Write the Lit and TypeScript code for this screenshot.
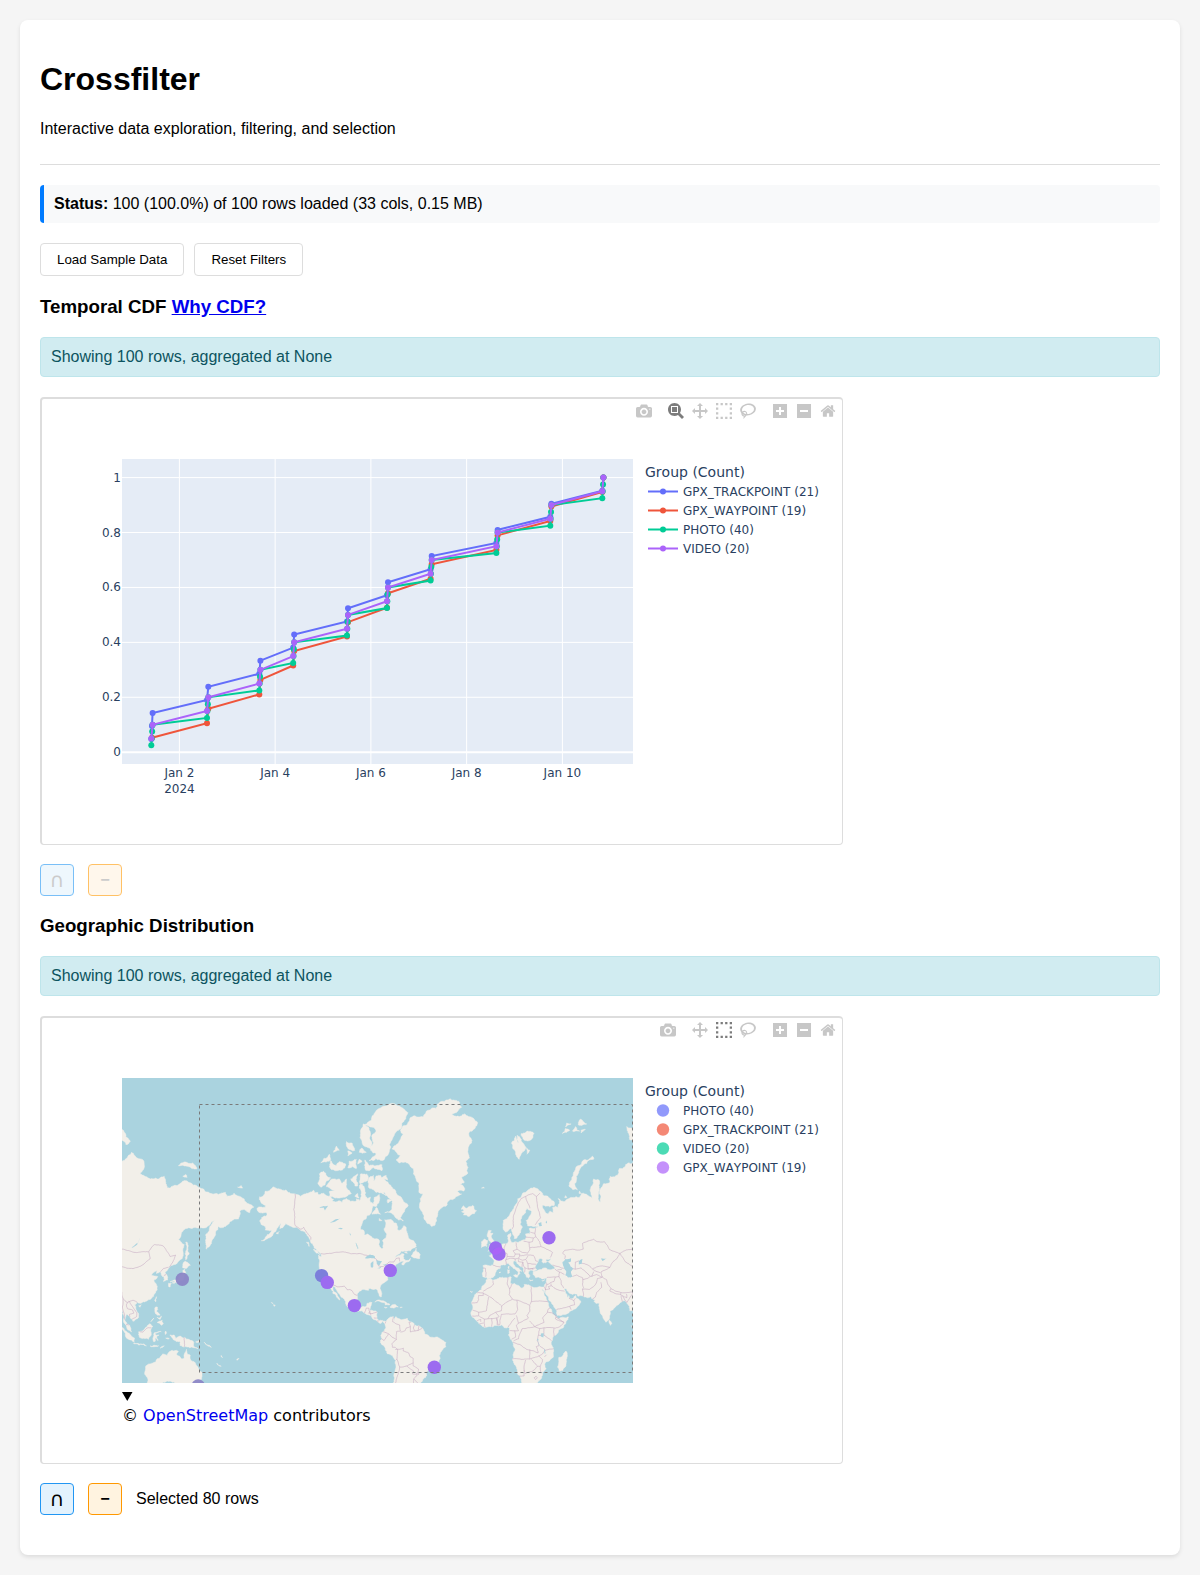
import { LitElement, html, svg, css } from "lit";
import { customElement, property } from "lit/decorators.js";

/* ---------- toolbar icons ---------- */

const ICONS: Record<string, { label: string; width: number; path: string }> = {
  camera: {
    label: "Download plot as a png",
    width: 1000,
    path: "m500 450c-83 0-150-67-150-150 0-83 67-150 150-150 83 0 150 67 150 150 0 83-67 150-150 150z m400 150h-120c-16 0-34 13-39 29l-31 93c-6 15-23 28-40 28h-340c-16 0-34-13-39-28l-31-94c-6-15-23-28-40-28h-120c-55 0-100-45-100-100v-450c0-55 45-100 100-100h800c55 0 100 45 100 100v450c0 55-45 100-100 100z m-400-550c-138 0-250 112-250 250 0 138 112 250 250 250 138 0 250-112 250-250 0-138-112-250-250-250z m365 380c-19 0-35 16-35 35 0 19 16 35 35 35 19 0 35-16 35-35 0-19-16-35-35-35z",
  },
  zoom: {
    label: "Zoom",
    width: 1000,
    path: "m1000-25l-250 251c40 63 63 138 63 218 0 224-182 406-407 406-224 0-406-182-406-406s183-406 407-406c80 0 155 22 218 62l250-250 125 125z m-812 250l0 438 437 0 0-438-437 0z m62 375l313 0 0-312-313 0 0 312z",
  },
  pan: {
    label: "Pan",
    width: 1000,
    path: "m1000 350l-187 188 0-125-250 0 0 250 125 0-188 187-187-187 125 0 0-250-250 0 0 125-188-188 186-187 0 125 252 0 0-250-125 0 187-188 188 188-125 0 0 250 250 0 0-126 187 188z",
  },
  select: {
    label: "Box Select",
    width: 1000,
    path: "m0 850l0-143 143 0 0 143-143 0z m286 0l0-143 143 0 0 143-143 0z m285 0l0-143 143 0 0 143-143 0z m286 0l0-143 143 0 0 143-143 0z m-857-286l0-143 143 0 0 143-143 0z m857 0l0-143 143 0 0 143-143 0z m-857-285l0-143 143 0 0 143-143 0z m857 0l0-143 143 0 0 143-143 0z m-857-286l0-143 143 0 0 143-143 0z m286 0l0-143 143 0 0 143-143 0z m285 0l0-143 143 0 0 143-143 0z m286 0l0-143 143 0 0 143-143 0z",
  },
  lasso: {
    label: "Lasso Select",
    width: 1031,
    path: "m1018 538c-36 207-290 336-568 286-277-48-473-256-436-463 10-57 36-108 76-151-13-66 11-137 68-183 34-28 75-41 114-42l-55-70 0 0c-2-1-3-2-4-3-10-14-8-34 5-45 14-11 34-8 45 4 1 1 2 3 2 5l0 0 113 140c16 11 31 24 45 40 4 3 6 7 8 11 48-3 100 0 151 9 278 48 473 255 436 462z m-624-379c-80 14-149 48-197 96 42 42 109 47 156 9 33-26 47-66 41-105z m-187-74c-19 16-33 37-39 60 50-32 109-55 174-68-42-25-95-24-135 8z m360 75c-34-7-69-9-102-8 8 62-16 128-68 170-73 59-175 54-244-5-9 20-16 40-20 61-28 159 121 317 333 354s407-60 434-217c28-159-121-318-333-355z",
  },
  plus: {
    label: "Zoom in",
    width: 875,
    path: "m1 787l0-875 875 0 0 875-875 0z m687-500l-187 0 0-187-125 0 0 187-188 0 0 125 188 0 0 187 125 0 0-187 187 0 0-125z",
  },
  minus: {
    label: "Zoom out",
    width: 875,
    path: "m0 788l0-876 876 0 0 876-876 0z m688-500l-500 0 0 125 500 0 0-125z",
  },
  home: {
    label: "Reset view",
    width: 928,
    path: "m786 296v-267q0-15-11-26t-25-10h-214v214h-143v-214h-214q-15 0-25 10t-11 26v267q0 1 0 2t0 2l321 264 321-264q1-1 1-4z m124 39l-34-41q-5-5-12-6h-2q-7 0-12 3l-386 322-386-322q-7-4-13-4-7 2-12 7l-35 41q-4 5-3 13t6 12l401 334q18 15 42 15t43-15l136-114v109q0 8 5 13t13 5h107q8 0 13-5t5-13v-227l122-102q5-5 6-12t-4-13z",
  },
};

@customElement("mode-bar")
class ModeBar extends LitElement {
  @property({ attribute: false }) groups: string[][] = [];
  @property() active = "";

  static styles = css`
    :host { display: flex; gap: 8px; }
    .group { display: flex; }
    button {
      display: flex; align-items: center; justify-content: center;
      width: 24px; height: 20px; padding: 0; border: 0; background: none;
      fill: rgba(68, 68, 68, 0.3); cursor: pointer;
    }
    button.active, button:hover { fill: rgba(68, 68, 68, 0.7); }
    svg { height: 16px; display: block; }
  `;

  render() {
    return this.groups.map(
      (g) => html`<div class="group">
        ${g.map((name) => {
          const icon = ICONS[name];
          return html`<button
            class=${name === this.active ? "active" : ""}
            title=${icon.label}
            aria-label=${icon.label}
          >
            <svg viewBox="0 0 ${icon.width} 1000" width="16">
              <path transform="matrix(1 0 0 -1 0 850)" d=${icon.path}></path>
            </svg>
          </button>`;
        })}
      </div>`
    );
  }
}

const plotStyles = css`
  :host {
    display: block; position: relative; max-width: 800px;
    border: solid #dddddd; border-width: 2px 1px 1px 2px; border-radius: 4px;
    font-family: "DejaVu Sans", Verdana, sans-serif;
  }
  .plot { display: block; width: 100%; height: auto; }
  mode-bar { position: absolute; top: 2px; right: 2px; }
  text { fill: #2a3f5f; font-size: 12px; font-kerning: none; }
  .legend-title { font-size: 14px; }
  .end { text-anchor: end; }
  .mid { text-anchor: middle; }
`;

/* ---------- cumulative distribution chart ---------- */

// Horizontal extent of each burst of timestamps, in plot units.
const BURSTS: [number, number][] = [
  [109.3, 110.6], [165, 166.3], [217.3, 218.4], [251.2, 252.2], [305, 306],
  [345, 346], [388.6, 389.7], [454.4, 455.6], [508.3, 509.4], [560.3, 561.4],
];

const yAt = (v: number) => 353.2 - 274.6 * v;

// Number of points in burst k, for each series.
const SERIES = [
  { name: "GPX_TRACKPOINT", total: 21, color: "#636efa", count: (k: number) => (k ? 2 : 3) },
  { name: "GPX_WAYPOINT", total: 19, color: "#ef553b", count: (k: number) => (k ? 2 : 1) },
  { name: "PHOTO", total: 40, color: "#00cc96", count: () => 4 },
  { name: "VIDEO", total: 20, color: "#ab63fa", count: () => 2 },
];

const seriesPoints = (s: (typeof SERIES)[number]): [number, number][] => {
  const out: [number, number][] = [];
  let n = 0;
  BURSTS.forEach(([a, b], k) => {
    const c = s.count(k);
    for (let i = 0; i < c; i++) {
      n++;
      const t = c > 1 ? i / (c - 1) : 0.5;
      out.push([a + (b - a) * t, yAt(n / s.total)]);
    }
  });
  return out;
};

@customElement("cdf-plot")
class CdfPlot extends LitElement {
  static styles = [
    plotStyles,
    css`
      .area { fill: #e5ecf6; }
      .grid { stroke: #fff; stroke-width: 1; }
      .zero { stroke: #fff; stroke-width: 2; }
      .line { fill: none; stroke-width: 2; }
    `,
  ];

  render() {
    const days = ["Jan 2", "Jan 4", "Jan 6", "Jan 8", "Jan 10"];
    const dayX = (i: number) => 137.4 + 95.75 * i;
    return html`
      <svg class="plot" viewBox="0 0 800 445" role="img" aria-label="Temporal CDF">
        <rect class="area" x="80" y="60" width="511" height="305"></rect>
        ${days.map((d, i) => svg`
          <line class="grid" x1=${dayX(i)} x2=${dayX(i)} y1="60" y2="365"></line>
          <text class="mid" x=${dayX(i)} y="378">${d}</text>`)}
        <text class="mid" x=${dayX(0)} y="394">2024</text>
        ${[0, 0.2, 0.4, 0.6, 0.8, 1].map((v) => svg`
          <line class=${v ? "grid" : "zero"} x1="80" x2="591" y1=${yAt(v)} y2=${yAt(v)}></line>
          <text class="end" x="79" y=${yAt(v) + 4}>${v}</text>`)}
        ${SERIES.map((s) => {
          const pts = seriesPoints(s);
          return svg`<polyline class="line" stroke=${s.color} points=${pts.map((p) => p.join()).join(" ")}></polyline>
            ${pts.map((p) => svg`<circle cx=${p[0]} cy=${p[1]} r="3" fill=${s.color}></circle>`)}`;
        })}
        <text class="legend-title" x="603" y="78">Group (Count)</text>
        ${SERIES.map((s, i) => svg`
          <line class="line" stroke=${s.color} x1="606" x2="636" y1=${92.5 + 19 * i} y2=${92.5 + 19 * i}></line>
          <circle cx="621" cy=${92.5 + 19 * i} r="3" fill=${s.color}></circle>
          <text x="641" y=${97 + 19 * i}>${s.name} (${s.total})</text>`)}
      </svg>
      <mode-bar active="zoom" .groups=${[["camera"], ["zoom", "pan", "select", "lasso"], ["plus", "minus", "home"]]}></mode-bar>
    `;
  }
}

/* ---------- world map ---------- */

// Outlines as "lon,lat" pairs.
const LAND = [
  // North and Central America
  "-168,65.6 -166.5,66.2 -162,66.1 -161.8,66.6 -163.8,67 -166.3,68.3 -166,68.9 -163,69.3 -161.9,70.3 -158,70.8 -156.5,71.3 -154.5,70.9 -152,70.8 -150,70.5 -145,70 -141,69.6 -137,69 -134.5,69.6 -132,69.7 -129.5,70.1 -128,70.5 -127.5,70 -125,70 -124.4,69.4 -121,69.8 -117,69 -114,68.3 -115,67.8 -110,67.9 -108,67.4 -107.5,68 -105,68.5 -102,67.7 -98,67.8 -98,68.4 -96,68.2 -96,67.2 -94.5,69 -94.5,70 -96,71 -95,72 -93,71.5 -91.5,70 -92,69.5 -90,68.5 -88,68.8 -88,67.5 -86,67 -85.5,68.7 -82,69.5 -81.5,68.5 -82,67.5 -84,66.3 -86.5,66.3 -87,65.3 -88,64.2 -90.5,63.6 -91,62.7 -93.5,61.7 -94.8,60 -94.7,58.8 -93,58.7 -92.5,57 -90,57.2 -88,56.5 -85,55.3 -82.3,55.1 -82.2,53 -81,51.8 -80,51.2 -79,51.5 -79,53 -79.5,54.7 -77,56 -76.6,57.3 -78.5,58.8 -77.5,60 -78,62.3 -75,62.3 -73.5,62.4 -71.5,61.2 -69.6,61 -69.5,59 -68,58.5 -66.2,58.8 -65,60 -64.5,60.3 -62.5,58.2 -61.5,56.5 -60,55 -57.5,54.5 -56,53 -55.8,52 -58.5,51.3 -60,50.2 -64,50.3 -66.5,50.2 -69,48.5 -71,47 -69,48 -66,49.1 -64.4,48.8 -65,47.7 -64.5,46.3 -61.5,45.7 -60,46.8 -60.3,45.8 -63.5,44.6 -65.5,43.5 -66,44.3 -64.5,45.3 -67,45 -69,44.1 -70.5,43.5 -70.7,42.6 -70,41.8 -71.5,41.4 -73.8,40.7 -74,39.8 -75,38.7 -76.2,39.4 -76,37 -75.7,35.5 -77.5,34.3 -79,33.5 -81,32 -81.4,30.5 -80.1,27 -80.3,25.3 -81.2,25.2 -82.7,27.8 -82.8,29 -84,30 -85.5,29.8 -88,30.4 -89.5,30.2 -89.2,29.2 -91.5,29.5 -94,29.6 -96,28.5 -97.4,27 -97.3,25 -97.8,22.5 -97,20.5 -95.8,18.8 -94.5,18.2 -92,18.6 -90.7,19.5 -90.4,21 -88,21.6 -87,21.4 -87.5,19.8 -88.2,18 -88.5,16 -86,15.9 -83.3,15 -83.6,12.5 -83.7,11 -82,9 -79.8,9.5 -77.3,8.5 -77.5,7 -79.5,8.9 -80.4,7.5 -83,8.3 -85.7,10 -87.5,13 -91.5,14 -94,16.1 -96.5,15.7 -99.5,16.7 -102,17.9 -105,19.5 -105.6,21 -105.4,22 -107.5,24.6 -109.4,26 -111,28 -112.5,30 -113.2,31.3 -114.7,31.7 -114.5,30 -112.5,27.8 -111,25.5 -109.6,23.2 -110.2,23.3 -112,25 -112.3,26.2 -114.5,27.3 -114.2,28.5 -115.8,30.2 -117.1,32.5 -118.5,34 -120.6,34.6 -122,36.8 -123.8,39.3 -124.3,40.5 -124.2,43 -124,46.2 -124.6,48.3 -122.7,47.5 -122.7,49 -125,50.2 -127.7,51.5 -128.5,53 -130.3,54.7 -131.5,56 -134,58 -137,58.5 -140,59.8 -144,60.1 -147.5,61 -150,59.5 -151.8,59.2 -151,61 -154,59.2 -156.5,57.3 -159,55.8 -162,55 -164.8,54.6 -162,56 -158.5,57.6 -157.5,58.7 -162,58.7 -162,60 -165,60.8 -166,61.8 -164.5,63 -161,63.6 -161,64.5 -163,64.5 -166.3,64.6",
  // South America
  "-77.3,8.5 -75.5,10.6 -72,12 -71.5,11 -71.5,9.2 -70,12 -68,10.6 -64.5,10.2 -62,10.7 -60.5,8.5 -57,6 -54,5.8 -51.5,4 -50,1.5 -50,-.2 -48,-.7 -44,-2.6 -40,-2.9 -37,-4.8 -35,-6 -35,-9 -37.2,-11 -39,-13 -39.2,-17.5 -41,-21 -42,-23 -45,-23.5 -48.5,-25.8 -48.7,-28.5 -51.5,-31.5 -53.5,-34 -56,-35 -58,-34.5 -57,-36.5 -62,-39 -65,-41 -74,-42 -73,-37 -71.5,-31 -70.5,-24 -70.3,-18.3 -76,-14 -79,-8 -81.2,-6 -80,-3.3 -80.8,-1 -80,.8 -78.5,2 -77,4 -77.8,7",
  // Eurasia
  "28,71 31,70.3 33,69.4 41,67.7 41,66.5 35,66.4 33,66.7 35,64.5 37,64 38,64.9 40.5,64.6 40,66 42,66.4 44,66 44,68.5 46,67.8 48,67.6 54,68.7 59,68.8 60.5,69.8 65,69.2 68,68.2 67,69.5 66.8,71 69,73 72.5,72.8 72.8,70.5 72,68.5 73.5,67.5 74,68.8 74,71 76,72 78,72 80,72.2 80.5,73.5 86,73.8 87,75 93,76 99,76.4 104,77.7 108,76.8 112,76.5 113,75.5 110,74 113,73.6 119,73 123,73 127,73.5 128,72 129,71 133,71.5 136,71.6 140,72.5 145,72.2 150,71.5 153,70.9 160,69.7 165,69.5 170,70 171,69 176,69.8 180,69 185,67.2 188,66.8 190,66.2 187,64.5 183,65.5 180,65 179,62.5 174,61.8 170,60 165,60 163,58 162,56 160,53.3 156.7,51 156,54 156,57 159,60 163.5,62.5 160,61.5 155,59.5 150,59.5 143,59.3 137,55 139,54 141,53 140,50.5 140.3,48 135.5,44 132,43.2 130.5,42.3 127.5,39.7 129.4,37 129.2,35.3 126.5,34.5 126.8,37 125,38 124.5,39.8 121.5,39 122,40.6 119,39.2 118,38 122.4,37.3 119.5,35.3 121.8,32 122,29.5 119.5,25.5 117,23.5 114,22.3 110.5,21 108,21.6 106,20 107,17 109,13.5 109,11.5 106.8,10.3 105,8.7 104.8,10 102.5,12 101,13.4 100,13.3 99.3,10 100.5,7.3 102.5,6 103.5,3 104,1.4 101.5,2.7 100.3,6 98.4,8 98.7,11.5 97.5,16 94.3,16 94,19 92,21.5 91,22.6 88,21.7 86.8,20.5 85,19.5 82.3,16.6 80.3,15.5 80.2,13 79.8,10.3 77.5,8.1 76.3,9.8 74.8,13 73,18 72.8,21 70.5,20.8 69,22.3 70,23 67.5,24 66.5,25.3 62,25.2 57.5,25.7 56.8,27 54,26.6 51.3,27.9 50,30 48,30 49,27.5 50.2,26.5 50.8,24.8 51.4,26 51.6,24.3 54.5,24.2 56.3,26 56.5,24.4 59.8,22.5 57.8,19 55,17 52,15.6 45,12.7 43.3,12.7 42.7,16.5 39.2,21 37.2,25 34.8,28.2 35,29.5 34.2,27.8 32.5,30 32.3,31.2 34.3,31.3 35.5,33.8 36,36.6 34,36.2 32.5,36 30.6,36.7 28,36.7 26.3,38.5 26.3,40 29,40.5 31,41.1 35,42 38,41 41.5,41.5 41.5,42.5 38,44.5 37,45.4 39,47 35.3,46.3 35.3,45.2 36.5,45.3 33.6,44.5 32.5,45.4 33.5,46.1 31,46.7 29.7,45 28.6,43.8 27.7,42.5 28.2,41.4 29,41.1 26.5,40.4 24,40.8 23.5,40 22.8,40.4 23,39 24,38 23,36.5 21.7,36.9 21.2,38.3 19.4,40.3 19.5,41.8 17,43 15,44.3 14.5,45.3 13.6,45.5 12.4,45.3 12.4,44.2 14,42.5 16,41.9 18.4,40.2 17,40.4 16.6,39.8 17,39 15.8,38 15.8,40 14.3,40.8 12.3,41.8 10.3,43.3 8.8,44.4 7,43.6 4,43.5 3.1,43 3.2,41.8 .5,40.7 -.3,39.3 -.5,38 -2,36.8 -5.5,36 -6.5,37 -9,37.1 -9.4,38.8 -8.8,41 -9,43.1 -2,43.4 -1.4,44.5 -1.2,46 -4.5,48 -1.5,48.7 -1.7,49.7 1.5,50.2 4,51.8 5,53.3 8.5,53.7 8.2,56.5 10.5,57.6 10,55.5 11,54 14,54.2 18.5,54.7 21,55.2 21,57.3 24,57.2 23.5,59.2 28,59.5 30,60 25,60.2 22.5,60.2 21.4,62 25.3,64.9 22,65.8 21,64.5 17.5,62.3 17.2,60.6 18.8,59.8 16.5,57 14.5,55.5 13,55.5 11,59 10.5,59.3 7,58 5.2,59.5 5.2,62 10,64 13,66.3 15.5,68.4 19,69.8 25,71",
  // Africa
  "-6,35.8 -2,35.1 3,36.8 10,37.3 11,36.8 10.2,34.2 11,33.2 15.2,32.3 18.5,30.5 20,31.5 20,32.7 23,32.6 25,31.6 29,30.9 31,31.5 32.5,31.1 32.5,29.9 34,26.8 35.5,24 37.2,21 37.5,18.5 39.5,15.2 43,11.6 44.5,10.5 51.2,11.8 50.8,10 47.5,4.3 43,0 40,-3 39,-6 40.6,-11 40.6,-15 35,-19.8 35.5,-24 32.8,-26 32.5,-28.5 30,-31.5 27,-33.7 20,-34.8 18.3,-34 18.2,-32 15.2,-27 14.4,-22.5 11.8,-18 13.7,-11 12.2,-6 9,-1 9.7,3.8 8.5,4.6 6,4.3 4.3,6.3 1,5.9 -2,4.8 -4.5,5.2 -7.7,4.4 -11.5,6.9 -13.3,9 -15,11 -16.8,12.5 -17.5,14.7 -16.3,17 -16.5,20 -17,21 -15.5,24.5 -13,27.8 -10,29.5 -9.7,31.5 -7,33.7",
  "49.3,-12 50.4,-15.5 49.5,-18 47.2,-25 45,-25.5 43.5,-23 44.3,-20 44.3,-16.5 47,-15.5",
  // Greenland, Iceland, British Isles
  "-73,78.2 -68,79.2 -65,80.1 -67,80.6 -62,81.3 -58,82.1 -51,82 -48,82.6 -42,82.8 -38,83.4 -32,83.6 -26,83.4 -24,82.9 -31,82.3 -22,82.3 -16,81.9 -12.5,81.4 -16,80.6 -19,80.2 -17,79 -19.5,77.6 -18.5,76.8 -21,76.2 -19.5,75.2 -20,74 -24,73.4 -22,72.3 -25,71.9 -22,71 -22.5,70.3 -27,70.3 -24,69.6 -32,68.2 -35,66.4 -40,65.2 -41,63.3 -43,60.3 -45,60 -48,61 -50.5,62.8 -52,65 -53.5,67 -53,68.5 -51,69.6 -54,70 -54,71.3 -56,73 -58,75 -62,76 -68,76 -70,76.5 -67,77.2",
  "-24.4,65.6 -22.5,66.5 -20.5,65.8 -16,66.6 -13.5,65.1 -15,64.2 -18.8,63.3 -22.7,63.8 -22,64.5 -24,64.8 -22.2,65.3",
  "-5.5,50.1 -3,51.4 -5,51.8 -4.5,53 -3,53.5 -5,55 -6,56.5 -5,58.6 -3.1,58.5 -4,57.6 -2,57.5 -3,56 -1.5,54.8 .2,53 1.7,52.7 1,51.2 -2,50.6",
  "-10,51.7 -6.4,52.2 -6,53.5 -5.6,54.6 -7.5,55.3 -10,54.2",
  // Arctic islands
  "-61.5,66.6 -64,65 -67,63 -65,61.9 -70,62.8 -74,64.5 -78,64.5 -73,65.5 -73,68 -76,69 -79,70 -84,70 -89,71 -89.5,73 -86,73.7 -86,72.5 -84,73.6 -81,73.7 -78,72.8 -74,71.7 -71,70.7 -67,69",
  "-117,69 -113,68.6 -105,69 -101.5,69.7 -105,71 -105,73 -108,72 -110,73 -114,73 -118,72 -119,71.3 -113,70.4 -117,70.2",
  "-125,72 -124,74 -121,74.5 -116,73.2 -120,71.7 -123,71.2",
  "-102,73 -97,74 -97,71.5 -99,71.5", "-95.5,72 -90,72.7 -90.5,74 -95,74",
  "-80,75.7 -80,74.6 -91.5,74.7 -92,76.5 -89,75.5", "-117,75.3 -108,74.7 -105.5,75.8 -110,76.2 -112,75.5 -116,76.4",
  "-104,75.2 -98,75 -98,76.6 -103,76.3", "-123,76 -116,76.6 -117,77.4 -121,76.7", "-105,78.6 -99,78 -101,79 -105,79.2", "-114,77.7 -110,78 -112,78.6", "-96,77.7 -91,77.7 -94,78.3", "-97,75.8 -94,76.2 -96,76.6", "-104,77.2 -101,77.6 -104,77.9",
  "-76.5,78.3 -75,79 -79.5,76.4 -89,76.4 -84,77.5 -88,78 -86,79 -87,80 -84,80.5 -92,81.2 -85,82.4 -78,83 -70,83.1 -61.5,82.4 -66,81 -72,79.8",
  "-95,80.2 -94,79.2 -88,78.2 -87,79 -88,80.3 -93,81.3", "-87,64 -81,64 -84,66", "-82,62.7 -80,62 -82,62", "-76,67.3 -76,68.2 -73,68", "-80,73.2 -76,72.8 -77,73.7", "-99,69 -96,68.6 -97,69.7", "-80,69.8 -77,69.2 -78,70",
  "11,79 14,79.9 16,79 15,80 18,79.5 21,78.5 18,77.5 16.5,76.6 14,77.5", "18,80.2 22,80.5 27,80.2 23,79.3 20,79.4", "21,78.4 24,78 22,77.4",
  "47,80.2 52,80.6 49,80.8", "54,80.5 59,80.5 56,81", "58,81.2 64,81.3 60,81.8", "60,80.3 63,80.7 60,80.6", "49,81 53,81.3 50,81.4",
  "51.5,71.5 54,70.7 57.5,70.6 55.5,72 56.5,73.5 59,74.8 62,75.7 68.8,76.6 68,77.1 61,76.3 56.5,75.3 54.5,74 52.5,72.5", "94,79.5 100,78.8 103,79.2 98,80.6 92,81",
  "137,75.5 145,75.3 150,75 147,76 139,76", "140,73.5 143,73.3 142,73.9", "178.5,71.2 182,71 181,71.6", "49,69.2 50,68.7 48.5,68.7", "59,70.3 60,69.8 58.5,69.8", "-10,71 -8,71 -8.5,71.2",
  // Atlantic and Caribbean islands
  "-59.3,47.7 -56,51.5 -55.5,49.8 -53,48.5 -53.3,46.8 -56,47", "-64,49.9 -62,49.2 -64,49.5", "-128.3,50.8 -125,50 -123.5,48.4 -126,49.2",
  "-133,54 -131.7,54 -131.2,52.2", "-154.5,57.6 -152.3,58.2 -153,57.2", "-85,21.9 -82,23.2 -79,22.6 -75,20.7 -74.3,20.1 -77.6,19.9 -78.5,21.4 -82,22.4", "-74.4,18.5 -73,19.9 -70,19.7 -68.5,18.6 -71,18", "-78.3,18.4 -76.3,18.2 -77.5,17.8", "-67.2,18.4 -65.7,18.3 -67,18", "-156,20.2 -155,19.6 -155.8,19", "-157.8,21.5 -156.5,20.9 -157.5,21.2",
  // Mediterranean
  "12.5,38 15.6,38.2 15.1,36.8", "8.3,41 9.6,41 9.5,39.2 8.5,39", "8.7,42.5 9.4,43 9.3,41.5", "32.4,35 34.5,35.6 33.5,34.8", "23.6,35.5 26.3,35.3 24.5,34.9", "2.4,39.5 3.4,39.8 3,39.3",
  // Asia-Pacific islands
  "142,54 143,54 143.5,50 144.5,49 143,47 142,46 142,50", "140,42 141.5,45.4 145.3,43.3 143,42", "140,40.5 141.4,41.3 142,39.5 140.8,35.7 139.5,35.1 137,34.6 135.5,33.6 134,34.6 131,34.2 135.5,35.6 137.3,37.3 139.5,38.5", "130,33.5 132,33.5 131.2,31.3 130.2,31.3", "132.5,33.7 134.5,34.2 134,33.3",
  "120.2,23 121.5,25.2 121,22", "109,19.3 110.8,20 110,18.4", "120.3,16 120.8,18.5 122.2,18.3 121.5,15.5 124,13 121,13.8", "122,8 125.5,9.6 126.3,7 125,6 123.5,7.5", "122,11.5 124,10 125,12.3 123,11", "117.5,8.5 119.5,11 118.5,9.7",
  "109,1.5 111,1.8 113,3.2 116.7,7 119,5.2 117.8,3.5 117.8,1 116,-3.8 113,-3.3 110.2,-2.8", "95.3,5.6 98,4.2 103.5,-1 106,-3 105.8,-5.8 102,-3.9 98.7,1.7", "105.3,-6.7 108.5,-6.7 112.7,-7 114.4,-8.4 109,-7.8",
  "119,-3.3 119.8,.6 124.8,1.5 120.5,.4 121.3,-1 123.3,-.9 121.7,-2 122.5,-4.8 121,-2.8 120.4,-5.5 119.4,-5.5", "117,-8.5 123,-8.4 119,-9", "124,-10.1 127,-8.5 125,-9", "128,2 128.5,.5 127.6,-.5", "128,-3 130.5,-3.3 129,-3.5",
  "131,-.8 134,-.9 135,-3.3 138,-1.6 144.5,-4 147.8,-6.2 147.5,-8 150.7,-10.5 147,-9.5 143,-9.2 141,-9.1 138,-8.2 138,-5.5 133.2,-4 132.5,-2.8", "149,-5.7 152,-4.4 151,-6", "155,-6 156.5,-7.6 160,-9.5 156,-7.3", "164,-20.2 167,-22.3 165.5,-21.8", "178,-17.5 179.5,-17 178,-18.3", "167,-15 168,-16.5 167,-16",
  "114,-22 117,-20.7 121,-19.5 122.3,-17.2 124,-16.5 126,-14 129,-15 130.5,-12.5 132.5,-11.5 136.8,-12.2 135.7,-14.8 139,-17.3 141,-17 141.6,-13 142.6,-10.8 143.6,-14.3 145.3,-15 146.3,-18.8 149,-20.5 151,-23.5 153.3,-26 153.4,-29 151.5,-33 150,-37 140,-38 136,-34.5 131,-31.5 125,-33 118,-35 115,-34 115.5,-31.5 113.3,-26",
  "79.8,9.5 81.8,7.5 80.5,6 79.8,7.5", "-18,28.7 -16.3,28.3 -17,28", "69,49.5 70,49.3",
];

const WATER = [
  "47,45 49,46.4 53,46.8 53,45.2 51,44.7 52.8,42.6 54.5,41.5 53,40.2 54,37.3 51,36.8 49,38 49.6,40.3 47.5,43",
  "58.5,45.5 61,46.5 60.5,44 58.5,43.8", "31.8,.3 34,.3 33.5,-2.5 31.8,-2", "29.2,-3.5 30,-3.7 31,-8.5 30.2,-7.5", "34,-10 35,-13.5 34.6,-14", "30,61 32,61.5 32.5,60.2 31,60",
  "-92,46.8 -88.5,48.6 -85,47.8 -84.7,46.7 -88,47", "-87.8,42.3 -86.3,42.2 -86,45.5 -87.8,44.5", "-84,46 -80,45.5 -82,43.2 -83.5,44", "-83.3,41.8 -79,42.8 -81.5,41.7", "-79.5,43.5 -76.3,44 -77,43.3",
  "-98.5,53.8 -97,51 -96.5,51.5 -98,53.7", "-116.5,61.2 -109.5,62.7 -113.5,62.2", "-124,66 -118,66.5 -120,65.2 -121,66", "-111,59.3 -106.5,59.3 -109,59", "-103,58 -101.8,56.5 -102.5,57", "104,51.5 108,53 109.7,55.6 108.7,54", "35,61.5 36,62 36,61", "78,46.8 75,45.5 74,46.7", "-64.8,46.5 -62.2,46.3 -64,46.9",
];

const BORDERS = [
  "-141,69.6 -141,60.3 -137,59 -135,59.7 -133,58 -130,56 -130,55", "-122.8,49 -95.2,49 -92,48.3 -89.5,48 -88,48.2 -84.8,46.8 -83.5,46 -82.4,43 -79,42.7 -76.5,44 -74.8,45 -71.5,45 -70,46.7 -67.8,47 -67.5,45.3", "-117.1,32.5 -114.8,32.6 -111,31.3 -108.2,31.5 -106.5,31.8 -104.5,29.6 -102.5,29.7 -101,29 -99.3,26.7 -97.2,25.9",
  "-92.2,14.5 -91.5,16.2 -91,17.8 -89.2,17.8 -89,16 -87.8,13.2", "-88.3,15.7 -89.4,14.3 -87,14 -83.5,15", "-85.7,11.1 -83.7,11", "-82.8,9.5 -82.9,8.2",
  "-77.3,8.5 -77.8,7.2", "-72,11.5 -72.5,8.5 -70,7 -67.5,6.2 -67,2 -69.8,1.5 -69.8,-4 -73,-2.3 -75.3,0 -79,1.4", "-67,1.2 -64,2 -63,4 -60,5 -61,8 -59.8,8", "-57.2,6 -58,4 -56.5,2 -60,1.3 -60,5", "-54,5.8 -54.5,2.3 -56.5,2", "-54.5,2.3 -51.6,4", "-69.8,-4 -73,-7 -72.5,-9.5 -70.6,-9.5 -69,-11 -69.5,-17.5 -67.5,-22.8 -62.5,-22 -58,-20 -58,-17 -60,-16 -61,-13.5 -65,-12 -65,-10 -70.6,-11", "-80.3,-3.5 -78.5,-4.8 -75.3,0", "-70.3,-18.3 -69.5,-17.5", "-67.5,-22.8 -68.5,-27 -70,-31 -70,-36", "-62.5,-22 -57.7,-25.3 -58.5,-27.2 -55.8,-27.4 -54.5,-25.5 -54.3,-24 -58,-22 -58,-20", "-55.8,-27.4 -53.8,-27 -57.6,-30.2 -58.2,-34", "-57.6,-30.2 -53.4,-33.7",
  "-13,27.7 -8.7,27.7 -8.7,26 -12,26 -12,23.4 -13,21.4 -17,21", "-8.7,27.3 4.2,19.2 11.8,23.6 9.5,26.5 9.8,30 8,33 8.5,36.9", "-8.7,28.7 -4,31 -1.5,33 -2,35", "-5,25 -6.5,16 -12,15 -12,12.5 -16.5,12.4", "-12,15 -16.3,16.5", "4.2,19.2 4,16 0,15 -4,13 -5.5,10.5 -8,10.3 -11.5,12.3", "0,15 2.4,12 0,11 -5.5,10.5", "11.8,23.6 15,23 15.5,17 13.5,13.8 4,13.6 3.6,11.6 2.8,6.4", "15,23 24,19.5 24,15.6 22,12.7 23,11 16,7.5 14.5,12.8", "25,31.6 25,22 36.8,22", "25,22 24,20", "9.8,30 11.5,33", "8.7,4.8 13.5,11", "1.2,6 .5,11", "2.8,6.4 1.7,6.2 1,11", "-2.8,5.1 -2.8,11", "-7.5,4.4 -8,10.3", "-11.5,7 -8.5,7.6", "-13.3,9 -10.5,10 -10.5,8.4",
  "16,7.5 14.5,6 16,2.2 9.8,2.3", "18.5,3.5 22.5,4.2 27.4,5 31,3.7 30,-1 29.2,-4.5 30.5,-8.3 28.5,-9 29.8,-13.4 27,-12 22,-11 17,-7.5 12.3,-6", "18.5,3.5 16,-3.5 12.5,-5", "13.3,2.2 14,-2.4 11.2,-3.8", "24,9 27.4,5 34,8 33,11 36.4,15 36.8,17 38.5,18", "36.4,15 40,14.5 42.5,12.6 42,10.5 48,8 45,5 42,4 36,4.4 34,4.2 31,3.7", "41,4 41,-1.7", "34,4.2 34,-1 39.2,-4.7", "34,-1 30,-1", "42.5,11.5 48,8", "31,-8.5 34.7,-11.5 40.5,-10.5", "34.7,-11.5 33,-14 30.2,-15.3 33,-18 31.3,-22.3 32,-26.8", "24,-11 24,-17.5 11.8,-17.3", "24,-17.5 30.2,-15.6", "25.2,-17.8 29.4,-22.2 31.3,-22.3", "29.4,-22.2 25.6,-25.6 20.7,-26.8 20,-24.8 20,-22 21,-18.2", "20,-24.8 20,-28.4 16.5,-28.6", "27,-29.6 28.5,-28.6 29.3,-29.6 28,-30.6 27,-29.6", "35.7,-14.6 34.3,-16",
  "-7,37.2 -7.3,41.8 -8.8,41.9", "-1.8,43.3 3.1,42.5", "7.5,43.8 7,46 8,47.6 8,49 6,49.5 2.6,51", "7,46 10.4,46.8 13.7,46.5 13.7,45.6", "8,47.6 13,47.5 13.8,48.8 12.2,50.3 15,51 14.3,53.9", "6,49.5 6,51.8 7.2,53.3", "15,51 19,49.5 22.5,49.2 24,50.8 23.6,52.7 23.5,54 19.6,54.4", "13.8,48.8 17,48.8 16.1,46.8 13.7,46.5", "17,48 22.2,48.4 26.5,48.2 28.2,45.5 29.7,45.3", "16.1,46.8 18.8,45.9 21,46.2 22.8,48", "21,46.2 22.5,44.3 28.5,43.8", "22.5,44.3 23,41.4 28,42", "19.2,45 19.5,43.3 20.5,42 23,41.4 26.3,41.7 26,40.8", "20.5,42 20.5,40 20,39.7", "15.9,46.3 16,45.2 19,45 18.5,42.5", "21,56 26.5,55.7 25.8,54.2 23.5,54", "24.4,57.9 27.5,57.5 28.2,56.2 26.5,55.7", "28,59.4 27.5,57.5", "28.2,56.2 31,54 31.7,52.2 24,51.6", "31.7,52.2 34.5,51.5 40,49.5 38.3,47.2", "27.8,60.6 31.5,62.9 29.5,66 28.5,69 25.8,69.7 21,69 24,66 24,65.8", "31,69.8 28.8,69 28.5,69", "21,69 18,68.5 14.5,66 12.2,62 12.5,60 11.4,59",
  "40,43.5 46.5,41.9 48.5,41.8", "41.5,41.5 44.8,39.7 44.5,37.2 36,36.8", "43.5,41.1 46.5,41.2", "44.5,39.8 48.3,38.5", "44.5,37.2 46,35 46,33 48,30.5", "42,37 41,34.5 36,32.5 35.7,33.8", "38.8,33.4 39,32 44.7,29.2 48.4,28.6", "39,32 37,31.5 38,30 35,29.4 34.3,31.3", "35,29.4 35.6,32.7", "51.5,24.3 55,22.7 55.5,20 52,19 43,17 42.8,16.4", "52,19 53,16.7", "55,22.7 56,24.2",
  "48.5,46.5 49,48 47,49.3 48.5,50.5 54,51 59,50.6 61.5,51 61,53.5 69,55.2 71.3,54.2 76.5,54.2 80,50.8 87.3,49.1 85.5,47 82.5,45.2 80.2,42.2 75,43 71,42.5 68,41.5 66,43 61,44.3 58.5,45.5 56,45 56,41.3 52.5,41.7", "56,41.3 60,42 66.5,37.4 71,38.4 73.5,37.3 75,37 74,39.8 80.2,42.2", "54,37.4 57,38.2 61.2,36.6 61,33 61.7,31 61,29.8 61.7,25.2", "61.2,35.6 64.5,36.2 66.5,37.4", "61,29.8 66,29.8 69.5,32 71,34.3 71.5,36.2 75,37 78,35.5 79,32.5 81,30.2 88,27.8 92,27.8 97,28.3 98,24 101,21.5 105,23 108,21.6", "74,34 74.5,31 71,28 70,25 68.2,23.8", "81,30.2 80.2,28.8 88,26.5 88,27.8", "88.3,26.4 89,22", "92,27 92.2,24.5 89,26 92.3,21.5 94,24 97,28", "68,41.5 70.5,40.2 73.5,39.5", "67.5,37.2 69,40",
  "87.3,49.1 92,50.7 98.3,51 102,50.4 107,49.5 116,49.8 117,46.5 112,43.7 105,41.6 96.5,42.7 91,45.2 87.3,49.1", "116,49.8 120,53 126,52.5 131,47.7 135,48.3 133,45 130.6,42.4", "130,42.3 126.5,41.7 124.3,40", "126.7,37.9 128.4,38.5", "98,24 97.5,18.5 98.8,14 99,10", "101,21.5 100.3,20 101,17.5 104.8,16.5 105.5,14.3 102.5,13.5 102.8,11.8", "102,22.5 104.5,19 107.5,15 107.5,12 104.5,10.5", "109.6,1.6 112,1.2 115.5,4.3 117.8,4.2", "141,-2.6 141,-9.1", "100.1,6.5 102,6.2",
];

const MAP = { equatorY: 315.8, meridianX: 453.7, scale: 81.487 };
const WORLD_WIDTH = 512;

const project = (pair: string): [number, number] => {
  const [lon, lat] = pair.split(",").map(Number);
  const phi = (lat * Math.PI) / 180;
  return [
    MAP.meridianX + ((lon * Math.PI) / 180) * MAP.scale,
    MAP.equatorY - MAP.scale * Math.log(Math.tan(Math.PI / 4 + phi / 2)),
  ];
};

// Stable noise in -0.5..0.5, so that coasts are drawn the same way each time.
const noise = (x: number, y: number) => {
  const s = Math.sin(x * 127.1 + y * 311.7) * 43758.5453;
  return s - Math.floor(s) - 0.5;
};

// Splits long segments at displaced midpoints to give a natural coastline.
const roughen = (a: [number, number], b: [number, number], amount: number, out: string[]) => {
  const dx = b[0] - a[0];
  const dy = b[1] - a[1];
  if (Math.hypot(dx, dy) < 1.6) {
    out.push(`${b[0].toFixed(1)} ${b[1].toFixed(1)}`);
    return;
  }
  const n = noise(a[0] + b[0], a[1] + b[1]) * amount;
  const m: [number, number] = [(a[0] + b[0]) / 2 - dy * n, (a[1] + b[1]) / 2 + dx * n];
  roughen(a, m, amount, out);
  roughen(m, b, amount, out);
};

const toPath = (shapes: string[], closed: boolean, amount: number) =>
  shapes
    .map((shape) => {
      const pts = shape.trim().split(/\s+/).map(project);
      if (closed) pts.push(pts[0]);
      const out: string[] = [];
      for (let i = 1; i < pts.length; i++) roughen(pts[i - 1], pts[i], amount, out);
      return `M${pts[0][0].toFixed(1)} ${pts[0][1].toFixed(1)}L${out.join("L")}${closed ? "Z" : ""}`;
    })
    .join("");

const LAND_PATH = toPath(LAND, true, 0.35);
const WATER_PATH = toPath(WATER, true, 0.2);
const BORDER_PATH = toPath(BORDERS, false, 0.12);

const MAP_LEGEND = [
  { label: "PHOTO (40)", color: "#636efa" },
  { label: "GPX_TRACKPOINT (21)", color: "#ef553b" },
  { label: "VIDEO (20)", color: "#00cc96" },
  { label: "GPX_WAYPOINT (19)", color: "#ab63fa" },
];

const CITIES: [number, number, string][] = [
  [140.3, 261.3, "faded"], [156.2, 368, "faded"], [279.6, 257.6, "muted"], [285.3, 264.4, "full"],
  [312.4, 287.6, "full"], [348.3, 252.4, "full"], [392.3, 349.3, "full"], [453.6, 230, "full"],
  [457, 236, "full"], [507, 219.8, "full"],
];

@customElement("geo-plot")
class GeoPlot extends LitElement {
  static styles = [
    plotStyles,
    css`
      .sea { fill: #aad3df; }
      .land { fill: #f2efe9; stroke: #f2efe9; stroke-width: 0.5; }
      .border { fill: none; stroke: #c8adc4; stroke-width: 0.7; opacity: 0.85; }
      .selection { fill: none; stroke: #7a7a7a; stroke-width: 1; stroke-dasharray: 3 3; }
      .full { fill: #9c6bf0; }
      .overlap { fill: #aa63f8; }
      .muted { fill: #7c7fdb; }
      .faded { fill: #8b86c6; opacity: 0.95; }
      .swatch { opacity: 0.7; }
      .attribution { height: 80px; margin-left: 10%; font-size: 16px; line-height: 20px; }
      summary { display: flex; height: 16px; padding-top: 9px; box-sizing: content-box; list-style: none; cursor: pointer; }
      summary::-webkit-details-marker { display: none; }
      summary svg { display: block; }
      .credit { margin-top: -2px; color: #000; }
      .credit a { color: #0000ee; text-decoration: none; }
    `,
  ];

  render() {
    return html`
      <svg class="plot" viewBox="0 0 800 365" role="img" aria-label="Geographic Distribution">
        <defs><clipPath id="frame"><rect x="80" y="60" width="511" height="305"></rect></clipPath></defs>
        <g clip-path="url(#frame)">
          <rect class="sea" x="80" y="60" width="511" height="305"></rect>
          ${[0, -WORLD_WIDTH].map((dx) => svg`<g transform="translate(${dx} 0)">
            <path class="land" d=${LAND_PATH}></path>
            <path class="border" d=${BORDER_PATH}></path>
            <path class="sea" d=${WATER_PATH}></path>
          </g>`)}
          ${CITIES.map(([x, y, kind]) => svg`<circle class=${kind} cx=${x} cy=${y} r="6.7"></circle>`)}
          <path class="overlap" d="M460.3 230.2A6.7 6.7 0 0 1 450.3 235.8A6.7 6.7 0 0 1 460.3 230.2Z"></path>
        </g>
        <rect class="selection" x="157.5" y="86.5" width="433" height="268"></rect>
        <text class="legend-title" x="603" y="78">Group (Count)</text>
        ${MAP_LEGEND.map((item, i) => svg`
          <circle class="swatch" cx="621" cy=${92.5 + 19 * i} r="6.2" fill=${item.color}></circle>
          <text x="641" y=${97 + 19 * i}>${item.label}</text>`)}
      </svg>
      <details class="attribution" open>
        <summary aria-label="Toggle attribution">
          <svg width="11" height="9" viewBox="0 0 11 9"><path d="M0 0H10.5L5.25 9Z"></path></svg>
        </summary>
        <div class="credit">© <a href="#osm">OpenStreetMap</a> contributors</div>
      </details>
      <mode-bar active="select" .groups=${[["camera"], ["pan", "select", "lasso"], ["plus", "minus", "home"]]}></mode-bar>
    `;
  }
}

/* ---------- page ---------- */

@customElement("app-root")
class AppRoot extends LitElement {
  static styles = css`
    :host {
      display: block; box-sizing: border-box; min-height: 100vh; padding: 20px;
      background: #f5f5f5; color: #000;
      font: 16px/18px "Liberation Sans", Arial, sans-serif;
    }
    .card {
      padding: 20px 20px 40px; background: #fff; border-radius: 8px;
      box-shadow: 0 2px 4px rgba(0, 0, 0, 0.1);
    }
    header { padding: 21px 0 26px; border-bottom: 1px solid #ddd; }
    h1 { margin: 0 0 22px; font-size: 32px; line-height: 37px; }
    p { margin: 0; }
    .status {
      margin: 20px 0; padding: 10px; background: #f8f9fa;
      border-left: 4px solid #007bff; border-radius: 4px;
    }
    .toolbar { display: flex; gap: 10px; margin-bottom: 21px; }
    .toolbar button {
      padding: 8px 16px; border: 1px solid #ddd; border-radius: 4px; background: #fff;
      color: #000; font-family: inherit; line-height: 15px; cursor: pointer;
    }
    h2 { margin: 0 0 20px; font-size: 1.17em; line-height: 20px; }
    h2 a { color: #0000ee; }
    .notice {
      margin-bottom: 20px; padding: 10px; border: 1px solid #bee5eb; border-radius: 4px;
      background: #d1ecf1; color: #0c5460;
    }
    .actions { display: flex; align-items: center; gap: 14px; margin-top: 19px; }
    .actions button {
      width: 34px; height: 32px; padding: 0; border: 1px solid; border-radius: 4px;
      color: #000; font: bold 16px/18px "Liberation Sans", Arial, sans-serif; cursor: pointer;
    }
    .actions .intersect { border-color: #2196f3; background: #e3f2fd; font: 20px/18px "DejaVu Sans", sans-serif; }
    .actions .subtract { border-color: #ff9800; background: #fff3e0; }
    .actions button:disabled { opacity: 0.6; color: #aaa; cursor: default; }
    .temporal { margin-bottom: 20px; }
  `;

  private actions(disabled: boolean, message = "") {
    return html`<div class="actions">
      <button class="intersect" ?disabled=${disabled} aria-label="Keep selection">∩</button>
      <button class="subtract" ?disabled=${disabled} aria-label="Remove selection">−</button>
      ${message ? html`<span>${message}</span>` : ""}
    </div>`;
  }

  render() {
    return html`
      <main class="card">
        <header>
          <h1>Crossfilter</h1>
          <p>Interactive data exploration, filtering, and selection</p>
        </header>
        <div class="status"><strong>Status:</strong> 100 (100.0%) of 100 rows loaded (33 cols, 0.15 MB)</div>
        <div class="toolbar">
          <button>Load Sample Data</button>
          <button>Reset Filters</button>
        </div>
        <section class="temporal">
          <h2>Temporal CDF <a href="#why-cdf">Why CDF?</a></h2>
          <div class="notice">Showing 100 rows, aggregated at None</div>
          <cdf-plot></cdf-plot>
          ${this.actions(true)}
        </section>
        <section>
          <h2>Geographic Distribution</h2>
          <div class="notice">Showing 100 rows, aggregated at None</div>
          <geo-plot></geo-plot>
          ${this.actions(false, "Selected 80 rows")}
        </section>
      </main>
    `;
  }
}
